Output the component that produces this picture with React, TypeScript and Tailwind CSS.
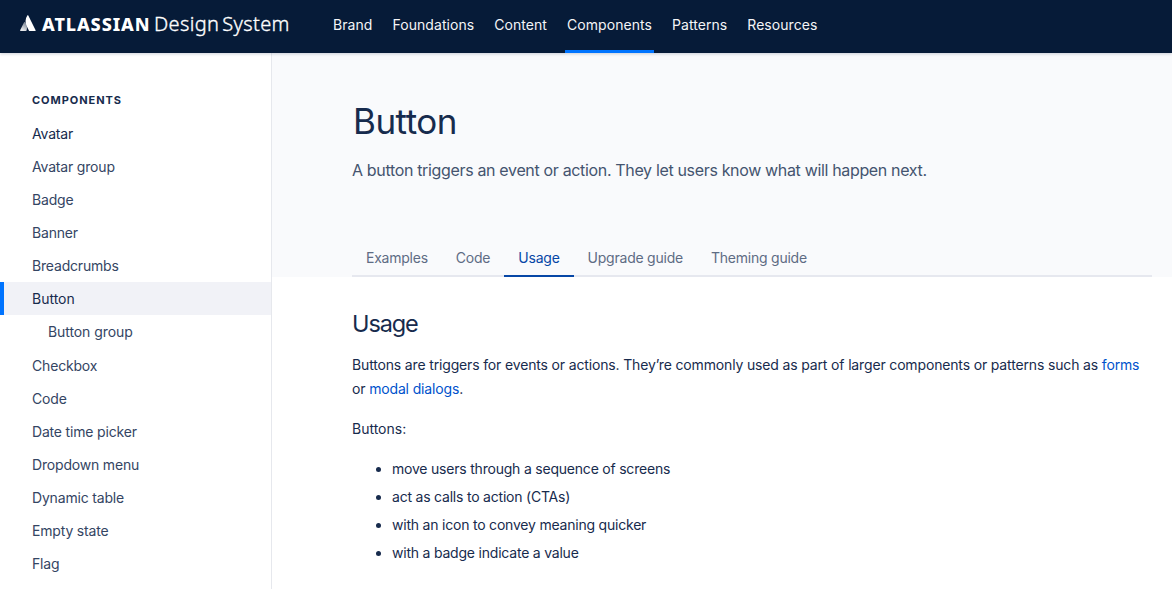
import React from "react";

const nav = [
  { label: "Brand" },
  { label: "Foundations" },
  { label: "Content" },
  { label: "Components", active: true },
  { label: "Patterns" },
  { label: "Resources" },
];

const components = [
  "Avatar", "Avatar group", "Badge", "Banner", "Breadcrumbs", "Button", "Button group",
  "Checkbox", "Code", "Date time picker", "Dropdown menu", "Dynamic table", "Empty state", "Flag",
];

const tabs = ["Examples", "Code", "Usage", "Upgrade guide", "Theming guide"];

const points = [
  "move users through a sequence of screens",
  "act as calls to action (CTAs)",
  "with an icon to convey meaning quicker",
  "with a badge indicate a value",
];

function Logo() {
  return (
    <a className="flex h-[50px] w-[313px] shrink-0 items-center pl-5 text-white">
      <svg width="16" height="17" viewBox="0 0 16 17" className="-mt-[4px] shrink-0">
        <defs>
          <linearGradient id="peak" x1="6.5" y1="8" x2="2.5" y2="15" gradientUnits="userSpaceOnUse">
            <stop offset="0" stopColor="#fff" stopOpacity="0.45" />
            <stop offset="1" stopColor="#fff" stopOpacity="0.9" />
          </linearGradient>
        </defs>
        <path d="M4.9 7.3C4.6 7 4.2 7 4 7.4L.1 15.3C-.05 15.7.2 16 .6 16H5.9C6.1 16 6.3 15.9 6.4 15.7C7.5 13.4 6.9 9.5 4.9 7.3Z" fill="url(#peak)" />
        <path d="M7.3 .6C5.2 3.9 5.1 7.8 6.5 10.7L9 15.7C9.1 15.9 9.3 16 9.5 16H15.1C15.5 16 15.8 15.7 15.6 15.3L8.3 .6C8.1.2 7.6.2 7.3 .6Z" fill="#fff" />
      </svg>
      <span className="-mt-[2px] ml-[6px] flex items-baseline whitespace-nowrap font-['Noto_Sans',sans-serif] leading-6">
        <span className="w-[112px] text-[18px] font-extrabold tracking-[0.9px]">ATLASSIAN</span>
        <span className="text-[20px] font-light tracking-[0.35px] [word-spacing:-2.5px] [-webkit-text-stroke:0.35px_white]">Design System</span>
      </span>
    </a>
  );
}

export default function App() {
  return (
    <div className="flex h-[589px] w-[1172px] flex-col overflow-hidden bg-white font-['Inter',sans-serif] text-[14px] text-[#172b4d]">
      <header className="z-10 flex h-[53px] shrink-0 items-start bg-[#061b38] shadow-[0_1px_3px_rgba(9,30,66,0.2)]">
        <Logo />
        <nav className="flex pl-[18px] text-[#f4f5f7]">
          {nav.map((n) => (
            <a
              key={n.label}
              className={
                n.active
                  ? "mr-[16px] h-[53px] rounded-t-[2px] border-b-[3px] border-[#0074ff] px-[2px] leading-[50px] tracking-[0.06px]"
                  : "mr-[16px] h-[53px] px-[2px] leading-[50px] tracking-[0.06px]"
              }
            >
              {n.label}
            </a>
          ))}
        </nav>
      </header>

      <div className="flex min-h-0 flex-1">
        <aside className="w-[272px] shrink-0 border-r border-[#e6e8ed] pt-[39px]">
          <h2 className="pl-8 text-[11px] font-bold leading-4 tracking-[0.95px]">COMPONENTS</h2>
          <ul className="mt-[9px] tracking-[-0.18px]">
            {components.map((c) => (
              <li
                key={c}
                className={
                  c === "Button"
                    ? "flex h-[33px] items-center border-l-4 border-[#0074ff] bg-[#f1f2f7] pl-7 tracking-normal"
                    : c === "Button group"
                      ? "flex h-[34px] items-center pl-12 pb-px text-[#344563] tracking-[-0.08px]"
                      : c === "Avatar"
                        ? "flex h-[33px] items-center pl-8"
                        : "flex h-[33px] items-center pl-8 text-[#344563]"
                }
              >
                {c}
              </li>
            ))}
          </ul>
        </aside>

        <main className="min-w-0 flex-1">
          <section className="flex h-[224px] flex-col bg-[#f9fafc] pl-20 pr-5">
            <h1 className="ml-px mt-[48px] text-[35px] leading-10 tracking-[-0.5px]">Button</h1>
            <p className="mt-[17px] whitespace-nowrap text-[16px] leading-6 tracking-[-0.34px] text-[#44546f]">
              A button triggers an event or action. They let users know what will happen next.
            </p>
            <div className="mt-auto flex h-[37px] border-b-2 border-[#e6e8ef] text-[#5e6c84] tracking-[-0.23px]">
              {tabs.map((t) => (
                <a
                  key={t}
                  className={
                    t === "Usage"
                      ? "h-[37px] border-b-2 border-[#0747a6] px-[14px] leading-[36px] text-[#0747a6]"
                      : "h-[37px] px-[14px] leading-[36px]"
                  }
                >
                  {t}
                </a>
              ))}
            </div>
          </section>

          <section className="pl-20 pr-5 tracking-[-0.155px]">
            <h2 className="mt-[33px] text-[23.5px] leading-7 tracking-[-1.1px]">Usage</h2>
            <p className="mt-[15px] whitespace-nowrap leading-6">
              Buttons are triggers for events or actions. They’re commonly used as part of larger components or patterns such as{" "}
              <a className="text-[#0052cc]">forms</a>
              <br />
              or <a className="text-[#0052cc]">modal dialogs</a>.
            </p>
            <p className="mt-4 leading-6 tracking-normal">Buttons:</p>
            <ul className="mt-4 flex flex-col gap-1 tracking-[-0.21px]">
              {points.map((p) => (
                <li key={p} className="flex items-center pl-[24px] leading-6">
                  <span className="mr-[11px] size-[5px] rounded-full bg-[#172b4d]" />
                  {p}
                </li>
              ))}
            </ul>
          </section>
        </main>
      </div>
    </div>
  );
}
